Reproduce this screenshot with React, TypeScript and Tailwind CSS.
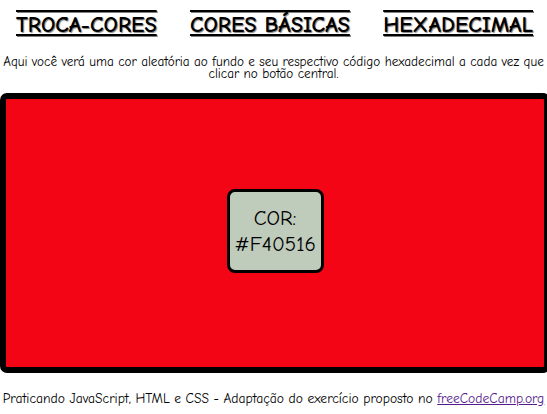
import React from "react";

export default function App() {
  const font = { fontFamily: '"Comic Sans MS", "Comic Neue", cursive' };
  return (
    <div className="w-[547px] h-[414px] overflow-hidden bg-white text-black flex flex-col" style={font}>
      <div className="flex justify-between pl-[16px] pr-[14px] pt-[11px]">
        {["TROCA-CORES", "CORES BÁSICAS", "HEXADECIMAL"].map((t) => (
          <h1
            key={t}
            className="text-[22.5px] font-bold leading-[28px] [text-decoration-line:underline_overline] [text-decoration-thickness:2px] [text-underline-offset:2px] [text-shadow:1px_1px_1px_gray]"
          >
            {t}
          </h1>
        ))}
      </div>
      <p className="mt-[17px] text-center text-[13.2px] leading-[12px]">
        Aqui você verá uma cor aleatória ao fundo e seu respectivo código hexadecimal a cada vez que clicar no botão central.
      </p>
      <div className="mt-[13px] h-[280px] w-[550px] shrink-0 border-[6px] border-black rounded-[7px] bg-[#f40516] flex items-center justify-center">
        <button className="w-[97px] h-[84px] border-[3px] border-black rounded-[8px] bg-[#bfcbbb] text-[21px] leading-[26px] flex flex-col items-center justify-center mt-[-4px]">
          <span>COR:</span>
          <span>#F40516</span>
        </button>
      </div>
      <p className="mt-[19px] text-center text-[13.6px] leading-[14px] whitespace-nowrap">
        Praticando JavaScript, HTML e CSS - Adaptação do exercício proposto no{" "}
        <a href="#" className="underline text-[#551a8b]">freeCodeCamp.org</a>
      </p>
    </div>
  );
}
